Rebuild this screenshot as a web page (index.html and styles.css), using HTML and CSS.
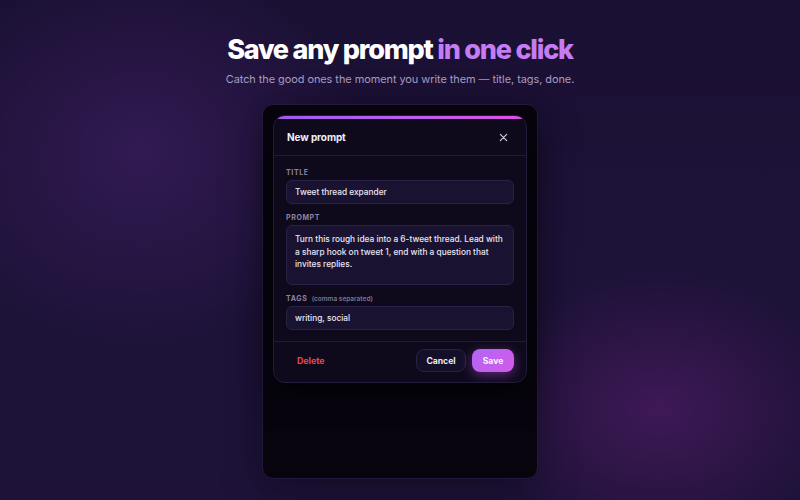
FILE: index.html
```html
<!DOCTYPE html>
<html>
<head>
<meta charset="utf-8">
<link rel="stylesheet" href="styles.css">
</head>
<body>
<div class="page">
  <h1 class="headline">Save any prompt <span class="accent">in one click</span></h1>
  <p class="sub">Catch the good ones the moment you write them — title, tags, done.</p>
  <div class="frame">
    <div class="modal">
      <div class="bar"></div>
      <div class="modal-head">
        <span class="modal-title">New prompt</span>
        <svg class="close" width="9" height="9" viewBox="0 0 10 10"><path d="M1.5 1.5 L8.5 8.5 M8.5 1.5 L1.5 8.5" stroke="#c9c2d8" stroke-width="1.4" stroke-linecap="round"/></svg>
      </div>
      <div class="modal-body">
        <div class="field">
          <div class="label">TITLE</div>
          <div class="input">Tweet thread expander</div>
        </div>
        <div class="field">
          <div class="label">PROMPT</div>
          <div class="input textarea">Turn this rough idea into a 6-tweet thread. Lead with a sharp hook on tweet 1, end with a question that invites replies.</div>
        </div>
        <div class="field">
          <div class="label">TAGS <span class="hint">(comma separated)</span></div>
          <div class="input">writing, social</div>
        </div>
      </div>
      <div class="modal-foot">
        <span class="delete">Delete</span>
        <div class="actions">
          <span class="btn cancel">Cancel</span>
          <span class="btn save">Save</span>
        </div>
      </div>
    </div>
  </div>
</div>
</body>
</html>
```
FILE: styles.css
```css
* { box-sizing: border-box; }
html, body { margin: 0; height: 100%; }
body {
  font-family: Inter, "Noto Sans", sans-serif;
  background:
    radial-gradient(ellipse 320px 280px at 140px 150px, rgba(70, 35, 110, 0.5), transparent 70%),
    radial-gradient(ellipse 260px 200px at 660px 410px, rgba(90, 30, 110, 0.55), transparent 70%),
    linear-gradient(180deg, #1a1033 0%, #1d1238 50%, #1e1239 100%);
  overflow: hidden;
  width: 800px;
  height: 500px;
}
.page {
  display: flex;
  flex-direction: column;
  align-items: center;
  padding-top: 33px;
}
.headline {
  margin: 0;
  font-size: 27px;
  line-height: 34px;
  font-weight: 800;
  letter-spacing: -0.045em;
  color: #ffffff;
}
.accent { color: #c57cf2; }
.sub {
  margin: 4px 0 0;
  font-size: 10.95px;
  line-height: 16px;
  color: #a99dc2;
  letter-spacing: -0.005em;
}
.frame {
  margin-top: 17px;
  width: 276px;
  height: 375px;
  border-radius: 11px;
  background: #07040e;
  border: 1px solid #241a3c;
  padding: 10px;
  box-shadow: 0 10px 40px rgba(0,0,0,0.35);
}
.modal {
  position: relative;
  width: 254px;
  border-radius: 12px;
  background: #0e0a1c;
  border: 1px solid #231b38;
  overflow: hidden;
  box-shadow: 0 10px 30px rgba(0,0,0,0.5);
}
.bar {
  height: 3px;
  background: linear-gradient(90deg, #9d5cf0, #c05cf0 60%, #e04ee0);
}
.modal-head {
  height: 37px;
  display: flex;
  align-items: center;
  justify-content: space-between;
  padding: 0 18px 0 13px;
  border-bottom: 1px solid #221a36;
}
.modal-title {
  font-size: 10px;
  font-weight: 700;
  color: #f2eefa;
  letter-spacing: -0.01em;
}
.close { display: block; }
.modal-body {
  padding: 12px 12px 11px 12px;
  display: flex;
  flex-direction: column;
  gap: 9px;
  border-bottom: 1px solid #221a36;
}
.field { display: flex; flex-direction: column; gap: 2px; }
.label {
  font-size: 7px;
  font-weight: 700;
  letter-spacing: 0.09em;
  color: #8d84a4;
  line-height: 10px;
}
.hint {
  font-size: 6.5px;
  letter-spacing: 0;
  font-weight: 600;
  color: #7c7394;
  margin-left: 2px;
}
.input {
  height: 24px;
  border-radius: 6px;
  background: #191331;
  border: 1px solid #2a2246;
  font-size: 8.3px;
  font-weight: 500;
  color: #ebe6f3;
  padding: 0 8px;
  display: flex;
  align-items: center;
}
.textarea {
  height: 60px;
  align-items: flex-start;
  padding: 7px 8px;
  line-height: 12.5px;
}
.modal-foot {
  display: flex;
  align-items: center;
  justify-content: space-between;
  padding: 7px 12px 10px 23px;
}
.delete {
  font-size: 8.8px;
  font-weight: 700;
  color: #e5484d;
}
.actions { display: flex; gap: 6px; }
.btn {
  height: 23px;
  display: flex;
  align-items: center;
  justify-content: center;
  border-radius: 8px;
  font-size: 8.6px;
  font-weight: 700;
}
.cancel {
  width: 50px;
  background: #14102a;
  border: 1px solid #2a2246;
  color: #ece8f4;
}
.save {
  width: 42px;
  background: linear-gradient(135deg, #b366f5, #d35ae8);
  color: #fbf4ff;
  box-shadow: 0 3px 12px rgba(190, 80, 230, 0.45);
}
```
